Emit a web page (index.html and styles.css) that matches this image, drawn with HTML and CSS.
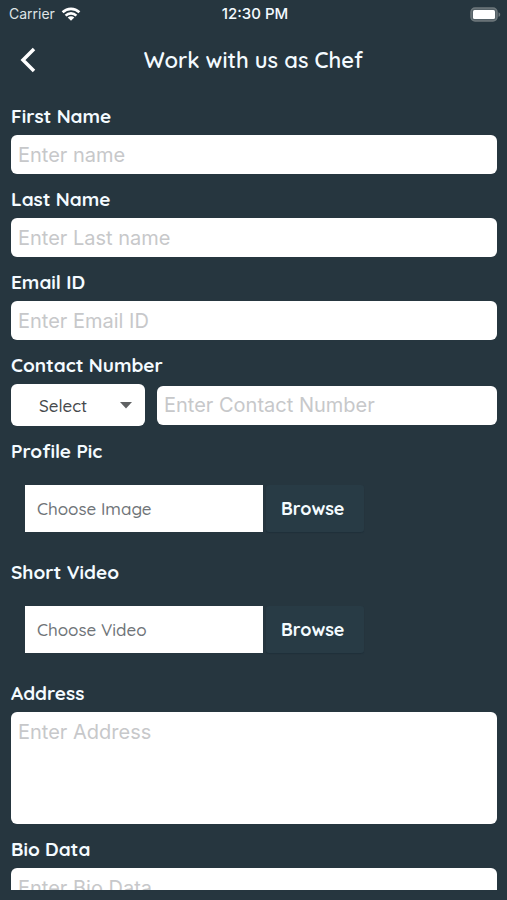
FILE: index.html
```html
<!DOCTYPE html>
<html lang="en">
<head>
<meta charset="utf-8">
<meta name="viewport" content="width=device-width, initial-scale=1">
<title>Work with us as Chef</title>
<link rel="stylesheet" href="styles.css">
</head>
<body>
<div class="status">
  <div class="carrier">
    <span>Carrier</span>
    <svg width="20" height="14" viewBox="0 0 20 14" aria-hidden="true">
      <g fill="none" stroke="#fff" stroke-width="2.6">
        <path d="M1.600 5.300C6.300.7 13.700.7 18.400 5.300"/>
        <path d="M4.600 8.600C7.700 5.600 12.300 5.600 15.400 8.600"/>
      </g>
      <path d="M6.700 10.400C8.600 8.800 11.400 8.800 13.300 10.400L10 13.800Z" fill="#fff"/>
    </svg>
  </div>
  <div class="time">12:30 PM</div>
  <svg class="battery" width="31" height="15" viewBox="0 0 31 15" aria-hidden="true">
    <rect x="1" y="1" width="26" height="13" rx="4" fill="#566268" stroke="#6d777b" stroke-width="1.500"/>
    <rect x="3" y="3" width="22" height="9" rx="1.500" fill="#fff"/>
    <path d="M28.500 5.200C30.800 6 30.800 9 28.500 9.800Z" fill="#6d777b"/>
  </svg>
</div>
<header class="header">
  <button class="back" type="button" aria-label="Back">
    <svg width="16" height="26" viewBox="0 0 16 26" aria-hidden="true">
      <path d="M14 2L3 13L14 24" fill="none" stroke="#fff" stroke-width="3.500"/>
    </svg>
  </button>
  <h1>Work with us as Chef</h1>
</header>
<main class="content">
  <form class="form">
    <div class="field">
      <label for="first">First Name</label>
      <input class="box" id="first" type="text" placeholder="Enter name">
    </div>
    <div class="field">
      <label for="last">Last Name</label>
      <input class="box" id="last" type="text" placeholder="Enter Last name">
    </div>
    <div class="field">
      <label for="email">Email ID</label>
      <input class="box" id="email" type="email" placeholder="Enter Email ID">
    </div>
    <div class="field">
      <label for="phone">Contact Number</label>
      <div class="contact">
        <div class="code">
          <select aria-label="Country code"><option>Select</option></select>
          <svg class="arrow" width="12" height="7" viewBox="0 0 12 7" aria-hidden="true"><path d="M0 0H12L6 6.500Z" fill="#5f6163"/></svg>
        </div>
        <input class="box" id="phone" type="tel" placeholder="Enter Contact Number">
      </div>
    </div>
    <div class="field">
      <label for="image">Profile Pic</label>
      <div class="file">
        <input id="image" type="text" placeholder="Choose Image" readonly>
        <button type="button">Browse</button>
      </div>
    </div>
    <div class="field">
      <label for="video">Short Video</label>
      <div class="file">
        <input id="video" type="text" placeholder="Choose Video" readonly>
        <button type="button">Browse</button>
      </div>
    </div>
    <div class="field">
      <label for="address">Address</label>
      <textarea class="box area" id="address" placeholder="Enter Address"></textarea>
    </div>
    <div class="field">
      <label for="bio">Bio Data</label>
      <textarea class="box area" id="bio" placeholder="Enter Bio Data"></textarea>
    </div>
  </form>
</main>
</body>
</html>
```
FILE: styles.css
```css
* { box-sizing: border-box; }

body {
  margin: 0;
  height: 100vh;
  display: flex;
  flex-direction: column;
  padding-bottom: 10px;
  background: #26363f;
  color: #f4fbff;
  font-family: Quicksand, Lato, sans-serif;
}

input, select, textarea, button {
  margin: 0;
  border: 0;
  font-family: inherit;
}

.status {
  display: grid;
  grid-template-columns: 1fr auto 1fr;
  align-items: center;
  height: 28px;
  padding: 0 6px 0 9px;
  font: 14px/18px Inter, sans-serif;
}

.carrier {
  display: flex;
  align-items: center;
  gap: 6px;
  color: #dfe4e6;
}

.time {
  font-size: 15px;
  font-weight: 500;
}

.battery { justify-self: end; }

.header {
  display: grid;
  grid-template-columns: 56px 1fr 56px;
  align-items: center;
  height: 64px;
}

.back {
  display: flex;
  justify-content: center;
  padding: 8px 0;
  background: none;
}

h1 {
  margin: 0;
  text-align: center;
  font-size: 22px;
  line-height: 28px;
  font-weight: 600;
}

.content {
  flex: 1;
  min-height: 0;
  overflow-y: auto;
  scrollbar-width: none;
}

.form {
  display: flex;
  flex-direction: column;
  gap: 13px;
  padding: 12px 10px 12px 11px;
}

.field {
  display: flex;
  flex-direction: column;
  gap: 7px;
}

label {
  align-self: flex-start;
  font-size: 19px;
  line-height: 24px;
  font-weight: 700;
}

.box {
  width: 100%;
  min-width: 0;
  height: 39px;
  padding: 0 7px;
  border-radius: 6px;
  background: #fff;
  color: #26363f;
  font: 20px/24px Inter, sans-serif;
}

.box::placeholder { color: #c7c8ca; opacity: 1; }

.area {
  display: block;
  height: 112px;
  padding: 8px 7px;
  resize: none;
}

.contact {
  display: flex;
  align-items: center;
  gap: 12px;
}

.code {
  position: relative;
  flex: 0 0 134px;
}

.code select {
  display: block;
  appearance: none;
  width: 100%;
  height: 42px;
  padding: 0 28px;
  border-radius: 6px;
  background: #fff;
  color: #46494c;
  font-size: 17px;
  font-weight: 500;
}

.arrow {
  position: absolute;
  right: 13px;
  top: 18px;
  pointer-events: none;
}

.file {
  display: flex;
  gap: 3px;
  padding: 15px 14px;
}

.file input {
  flex: 0 1 238px;
  min-width: 0;
  height: 47px;
  padding: 0 12px;
  background: #fff;
  font-size: 17px;
  font-weight: 500;
}

.file input::placeholder { color: #6f7478; opacity: 1; }

.file button {
  flex: 0 0 98px;
  padding: 0 15px;
  border-radius: 3px;
  background: #283b45;
  box-shadow: 0 1px 1px #20303a;
  color: #f4fbff;
  font-size: 18px;
  font-weight: 700;
  text-align: left;
}
```
